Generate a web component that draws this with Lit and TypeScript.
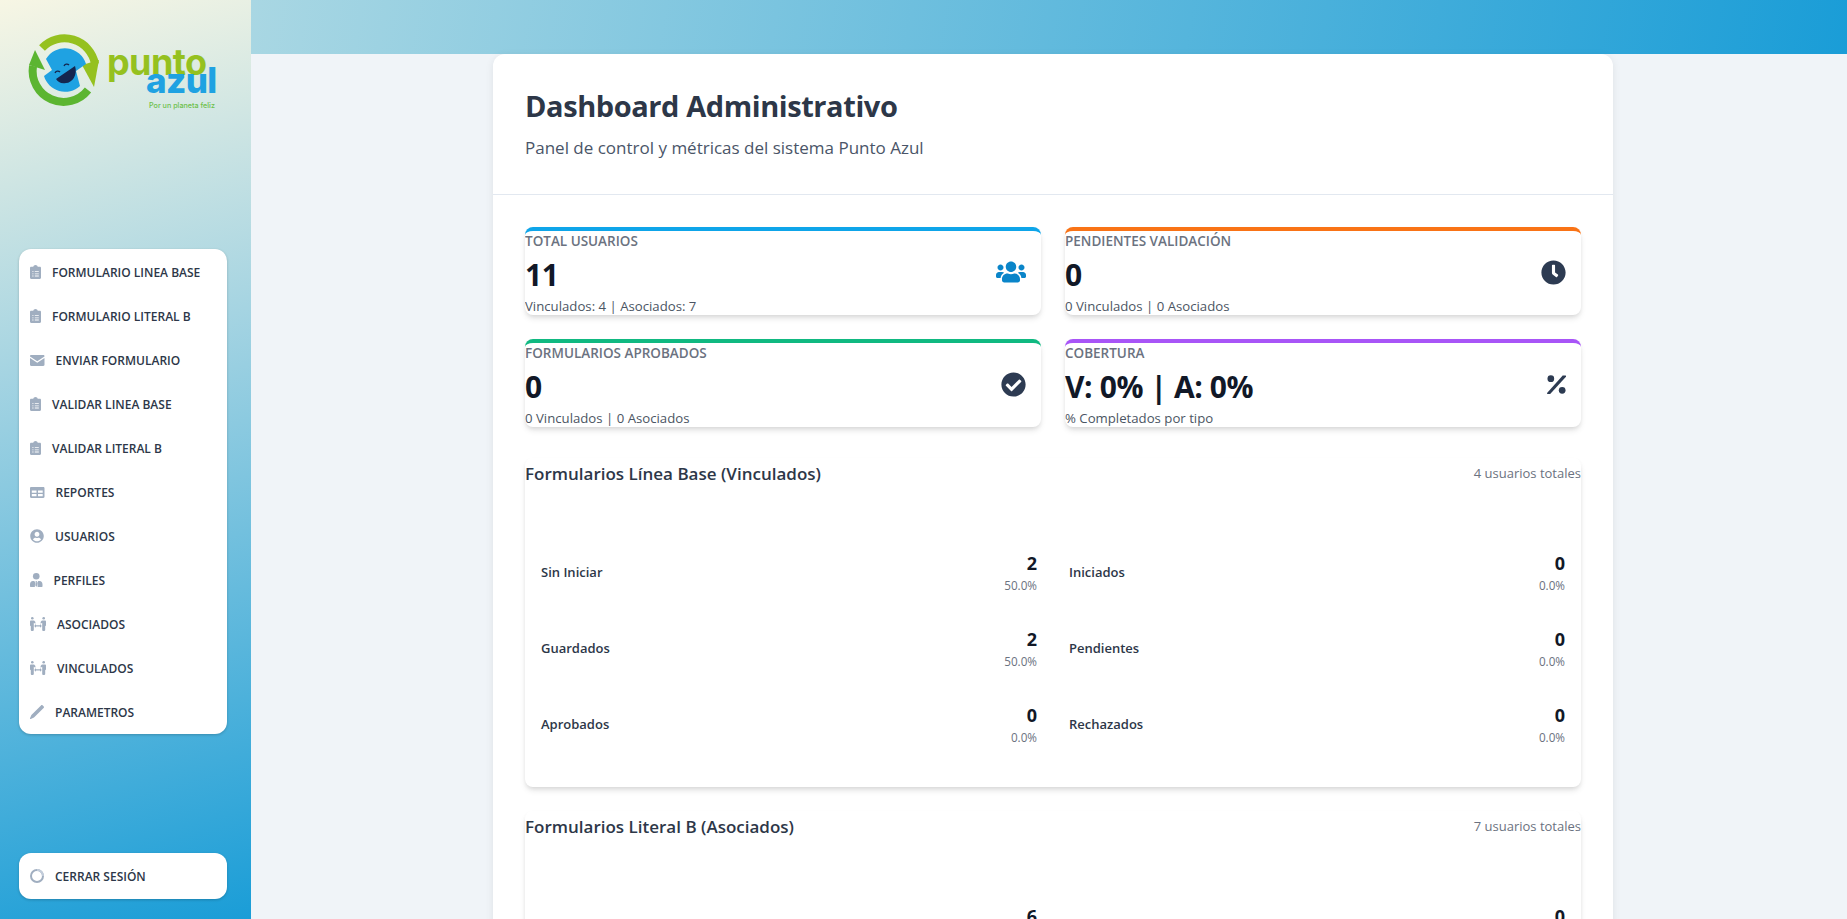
import { html, css, svg, LitElement } from "lit";
import { customElement } from "lit/decorators.js";

const clipboard = svg`<svg class="ico" style="width:11px;height:14px" viewBox="0 0 11 14"><path fill-rule="evenodd" d="M1.2 1.8h2.100C3.400.8 4.400 0 5.500 0s2.100.8 2.200 1.800h2.100c.7 0 1.200.5 1.200 1.200v9.800c0 .7-.5 1.200-1.200 1.200H1.200C.5 14 0 13.500 0 12.800V3c0-.7.500-1.200 1.200-1.200zM4.800 6.200h4v.8h-4zm0 2.200h4v.8h-4zm0 2.200h4v.8h-4zM2.300 6.200h1.200v.8H2.300zm0 2.200h1.200v.8H2.300zm0 2.200h1.200v.8H2.300z"/></svg>`;
const envelope = svg`<svg class="ico" style="width:14.500px;height:11px" viewBox="0 0 14.500 11"><path d="M0 1.200C0 .5.500 0 1.200 0h12.100c.7 0 1.200.5 1.200 1.200v.3L7.250 6.300 0 1.500z"/><path d="M0 2.900l7.250 4.800 7.250-4.800v6.900c0 .7-.5 1.200-1.200 1.200H1.200C.5 11 0 10.500 0 9.800z"/></svg>`;
const table = svg`<svg class="ico" style="width:14.500px;height:11px" viewBox="0 0 14.500 11"><path fill-rule="evenodd" d="M1.200 0h12.100c.7 0 1.200.5 1.200 1.200v8.600c0 .7-.5 1.200-1.200 1.200H1.200C.5 11 0 10.500 0 9.800V1.200C0 .5.500 0 1.200 0zM1.800 3.400v2.300h4.700V3.400zm6.200 0v2.300h4.700V3.400zM1.800 7v2.200h4.700V7zm6.200 0v2.200h4.700V7z"/></svg>`;
const userCircle = svg`<svg class="ico" style="width:14px;height:14px" viewBox="0 0 496 512"><path d="M248 8C111 8 0 119 0 256s111 248 248 248 248-111 248-248S385 8 248 8zm0 96c48.600 0 88 39.400 88 88s-39.400 88-88 88-88-39.400-88-88 39.400-88 88-88zm0 344c-58.700 0-111.300-26.600-146.500-68.200 18.800-35.400 55.600-59.800 98.500-59.800 2.400 0 4.800.4 7.100 1.100 13 4.200 26.600 6.900 40.900 6.900 14.300 0 28-2.700 40.900-6.900 2.300-.7 4.700-1.100 7.100-1.100 42.900 0 79.700 24.400 98.500 59.800C359.300 421.400 306.700 448 248 448z"/></svg>`;
const userTie = svg`<svg class="ico" style="width:12.500px;height:14px" viewBox="0 0 12.500 14"><circle cx="6.250" cy="3.300" r="3.300"/><path d="M2.800 8h1.500l1 1.700-.5 3.500.2.800H.6C.2 14 0 13.700 0 13.300v-1.900C0 9.500 1.200 8 2.800 8zM9.700 8H8.200l-1 1.700.5 3.500-.2.800h4.400c.4 0 .6-.3.6-.7v-1.900C12.500 9.500 11.300 8 9.700 8z"/><path d="M5.600 8h1.300l-.1 1.300.4 3-.95 1.700-.95-1.700.4-3z"/></svg>`;
const peopleArrows = svg`<svg class="ico" style="width:16px;height:14px" viewBox="0 0 16 14"><circle cx="2.300" cy="1.300" r="1.300"/><circle cx="13.700" cy="1.300" r="1.300"/><path d="M.8 3.600h2.800c.6 0 1.100.3 1.400.8l.4.7v1.700l-1.600-1v7.200c0 .5-.4.9-.9.9H1.700c-.5 0-.9-.4-.9-.9V9.300L0 8.500V4.400c0-.5.300-.8.800-.8zM15.200 3.600h-2.800c-.6 0-1.100.3-1.400.8l-.4.7v1.700l1.600-1v7.200c0 .5.400.9.900.9h1.200c.5 0 .9-.4.900-.9V9.300l.8-.8V4.400c0-.5-.3-.8-.8-.8z"/><path d="M6 8.200h4V7l1.800 1.900L10 10.800V9.600H6v1.200L4.200 8.900 6 7z"/></svg>`;
const pencil = svg`<svg class="ico" style="width:14px;height:14px" viewBox="0 0 14 14"><path d="M11 .4c.5-.5 1.200-.5 1.700 0l.9.9c.5.5.5 1.200 0 1.700L4 12.600.8 14c-.5.2-1-.3-.8-.8L1.400 10z"/></svg>`;
const ring = svg`<svg class="ico" style="width:14px;height:14px" viewBox="0 0 14 14"><circle cx="7" cy="7" r="6" fill="none" stroke="#a0aec0" stroke-width="2"/><path d="M7 1a6 6 0 0 1 6 6" fill="none" stroke="#c3cddb" stroke-width="2"/></svg>`;

const users = svg`<svg class="stat-ico" width="30" height="24" viewBox="0 0 640 512" fill="#0a85c9"><path d="M96 224c35.300 0 64-28.700 64-64s-28.700-64-64-64-64 28.700-64 64 28.700 64 64 64zm448 0c35.300 0 64-28.700 64-64s-28.700-64-64-64-64 28.700-64 64 28.700 64 64 64zm32 32h-64c-17.600 0-33.500 7.100-45.100 18.600 40.300 22.100 68.900 62 75.100 109.400h66c17.700 0 32-14.300 32-32v-32c0-35.300-28.700-64-64-64zm-256 0c61.900 0 112-50.100 112-112S381.900 32 320 32 208 82.100 208 144s50.100 112 112 112zm76.800 32h-8.300c-20.800 10-43.900 16-68.500 16s-47.600-6-68.500-16h-8.300C179.600 288 128 339.600 128 403.200V432c0 26.500 21.500 48 48 48h288c26.500 0 48-21.500 48-48v-28.800c0-63.600-51.600-115.200-115.200-115.200zm-223.700-13.400C161.500 263.100 145.600 256 128 256H64c-35.300 0-64 28.700-64 64v32c0 17.700 14.300 32 32 32h65.900c6.300-47.400 34.900-87.300 75.200-109.400z"/></svg>`;
const clock = svg`<svg class="stat-ico" width="25" height="25" viewBox="0 0 512 512" fill="#2d3b52"><path d="M256 8C119 8 8 119 8 256s111 248 248 248 248-111 248-248S393 8 256 8zm92.490 313l-20 25a16 16 0 0 1-22.490 2.500l-67-49.720a40 40 0 0 1-15-31.230V112a16 16 0 0 1 16-16h32a16 16 0 0 1 16 16v144l58 42.500a16 16 0 0 1 2.490 22.500z"/></svg>`;
const check = svg`<svg class="stat-ico" width="25" height="25" viewBox="0 0 512 512" fill="#2d3b52"><path d="M504 256c0 136.967-111.033 248-248 248S8 392.967 8 256 119.033 8 256 8s248 111.033 248 248zM227.314 387.314l184-184c6.248-6.248 6.248-16.379 0-22.627l-22.627-22.627c-6.248-6.249-16.379-6.249-22.628 0L216 308.118l-70.059-70.059c-6.248-6.248-16.379-6.248-22.628 0l-22.627 22.627c-6.248 6.248-6.248 16.379 0 22.627l104 104c6.249 6.249 16.379 6.249 22.628.001z"/></svg>`;
const percent = svg`<svg class="stat-ico" width="19" height="21" viewBox="0 0 18 20" fill="#2d3b52"><circle cx="3.600" cy="4.500" r="3.200"/><circle cx="14.400" cy="15.500" r="3.200"/><path d="M15.200 1.500h2.300c.5 0 .8.600.5 1L3.200 18.700c-.2.200-.4.300-.7.300H.5c-.5 0-.8-.6-.5-1L14.500 1.800c.2-.2.400-.3.700-.3z"/></svg>`;

const navItems = [
  { icon: clipboard, label: "FORMULARIO LINEA BASE" },
  { icon: clipboard, label: "FORMULARIO LITERAL B" },
  { icon: envelope, label: "ENVIAR FORMULARIO" },
  { icon: clipboard, label: "VALIDAR LINEA BASE" },
  { icon: clipboard, label: "VALIDAR LITERAL B" },
  { icon: table, label: "REPORTES" },
  { icon: userCircle, label: "USUARIOS" },
  { icon: userTie, label: "PERFILES" },
  { icon: peopleArrows, label: "ASOCIADOS" },
  { icon: peopleArrows, label: "VINCULADOS" },
  { icon: pencil, label: "PARAMETROS" },
];

const stats = [
  { label: "TOTAL USUARIOS", value: "11", sub: "Vinculados: 4 | Asociados: 7", color: "#0ea5e9", icon: users },
  { label: "PENDIENTES VALIDACIÓN", value: "0", sub: "0 Vinculados | 0 Asociados", color: "#f97316", icon: clock },
  { label: "FORMULARIOS APROBADOS", value: "0", sub: "0 Vinculados | 0 Asociados", color: "#10b981", icon: check },
  { label: "COBERTURA", value: "V: 0% | A: 0%", sub: "% Completados por tipo", color: "#a855f7", icon: percent },
];

const sections = [
  {
    title: "Formularios Línea Base (Vinculados)",
    total: "4 usuarios totales",
    rows: [
      ["Sin Iniciar", "2", "50.0%"],
      ["Iniciados", "0", "0.0%"],
      ["Guardados", "2", "50.0%"],
      ["Pendientes", "0", "0.0%"],
      ["Aprobados", "0", "0.0%"],
      ["Rechazados", "0", "0.0%"],
    ],
  },
  {
    title: "Formularios Literal B (Asociados)",
    total: "7 usuarios totales",
    rows: [
      ["Sin Iniciar", "6", "85.7%"],
      ["Iniciados", "0", "0.0%"],
    ],
  },
];

@customElement("app-root")
export class AppRoot extends LitElement {
  static styles = css`
    :host {
      display: grid;
      grid-template-columns: 251px 1fr;
      height: 919px;
      overflow: hidden;
      font-family: "Open Sans", "Noto Sans", sans-serif;
      background: #f0f4f8;
    }
    .sidebar {
      display: flex;
      flex-direction: column;
      height: 919px;
      box-sizing: border-box;
      padding: 0 24px 20px 19px;
      background: linear-gradient(165deg, #f7f6e4 0%, #a5d4e2 38%, #1a9dd7 100%);
    }
    .logo {
      display: block;
      margin: 0 -24px 0 -19px;
      width: 251px;
      height: 249px;
      flex: none;
    }
    .nav,
    .logout {
      background: #fff;
      border-radius: 12px;
      box-shadow: 0 1px 3px rgba(0, 0, 0, 0.2);
    }
    .nav {
      padding-top: 1px;
    }
    .item {
      display: flex;
      align-items: center;
      gap: 11px;
      height: 44px;
      padding-left: 11px;
      font-size: 12px;
      font-weight: 600;
      color: #2d3748;
      white-space: nowrap;
    }
    .ico {
      flex: none;
      fill: #a0aec0;
    }
    .logout {
      margin-top: auto;
      height: 46px;
    }
    .logout .item {
      height: 46px;
    }
    .main {
      min-width: 0;
    }
    .topbar {
      height: 54px;
      background: linear-gradient(100deg, #a9d7e3 0%, #1a9dd7 100%);
    }
    .card {
      width: 1120px;
      margin-left: 242px;
      background: #fff;
      border-radius: 12px 12px 0 0;
      box-shadow: 0 2px 8px rgba(0, 0, 0, 0.08);
    }
    .head {
      padding: 32px 32px 33.500px;
      border-bottom: 1px solid #e2e8f0;
    }
    h1 {
      margin: 0;
      font-size: 29px;
      line-height: 40px;
      font-weight: 700;
      letter-spacing: -0.42px;
      color: #2d3748;
    }
    .head p {
      margin: 10px 0 0;
      font-size: 17px;
      line-height: 24px;
      color: #4a5568;
    }
    .body {
      padding: 32px 32px 0;
    }
    .stats {
      display: grid;
      grid-template-columns: 1fr 1fr;
      gap: 24px;
      margin-bottom: 31px;
    }
    .stat {
      display: flex;
      flex-direction: column;
      height: 88px;
      box-sizing: border-box;
      border-top: 4px solid;
      border-radius: 8px;
      background: #fff;
      box-shadow: 0 4px 6px -1px rgba(0, 0, 0, 0.12), 0 2px 4px -1px rgba(0, 0, 0, 0.07);
      overflow: hidden;
    }
    .stat-label {
      padding-top: 1px;
      font-size: 13.500px;
      line-height: 18px;
      font-weight: 600;
      color: #6b7280;
    }
    .stat-mid {
      display: flex;
      justify-content: space-between;
      align-items: center;
      flex: 1;
      padding-right: 15px;
    }
    .stat-ico {
      margin-top: -2px;
    }
    .stat-value {
      margin-top: 3px;
      font-size: 30px;
      line-height: 44px;
      font-weight: 700;
      letter-spacing: -0.4px;
      color: #111827;
    }
    .stat-sub {
      padding-bottom: 1px;
      font-size: 13.200px;
      line-height: 18px;
      color: #4b5563;
    }
    .section {
      margin-top: 24px;
      padding-bottom: 25px;
      border-radius: 8px;
      box-shadow: 0 4px 6px -1px rgba(0, 0, 0, 0.12), 0 2px 4px -1px rgba(0, 0, 0, 0.07);
    }
    .section-head {
      display: flex;
      justify-content: space-between;
      align-items: center;
      height: 31px;
    }
    h2 {
      margin: 0;
      font-size: 17px;
      font-weight: 600;
      color: #2d3748;
    }
    .total {
      font-size: 13px;
      color: #6b7280;
    }
    .rows {
      display: grid;
      grid-template-columns: 1fr 1fr;
      column-gap: 32px;
      padding: 45px 16px 0;
    }
    .row {
      display: flex;
      justify-content: space-between;
      align-items: center;
      height: 76px;
    }
    .row-label {
      font-size: 13px;
      font-weight: 600;
      color: #2d3748;
    }
    .row-num {
      text-align: right;
    }
    .row-value {
      font-size: 18px;
      line-height: 24px;
      font-weight: 700;
      color: #111827;
    }
    .row-pct {
      margin-top: 2px;
      font-size: 11.700px;
      line-height: 16px;
      color: #6b7280;
    }
  `;

  private logo() {
    return svg`<svg class="logo" viewBox="0 0 251 249">
      <path d="M42 48A31 31 0 0 1 95 64" fill="none" stroke="#95c11f" stroke-width="8"/>
      <path d="M82 65l17-5l-5 27z" fill="#95c11f"/>
      <path d="M88 90A31 31 0 0 1 33 66" fill="none" stroke="#5cb531" stroke-width="8"/>
      <path d="M29 65l6-15l10 20z" fill="#5cb531"/>
      <path d="M46 59A22 22 0 0 1 86 64L76 71L80 86A22 22 0 0 1 44 76L52 70z" fill="#1fa2e2"/>
      <path d="M56 79L75 66C78 75 72 83 66 83C61 84 58 82 56 79z" fill="#14264f"/>
      <path d="M55 73a3 3 0 0 1 5-1M64 66a3 3 0 0 1 5-1" fill="none" stroke="#14264f" stroke-width="1.300"/>
      <text x="107" y="75" font-family="Inter, sans-serif" font-weight="700" font-size="36" letter-spacing="-.6" fill="#95c11f">punto</text>
      <text x="146" y="93" font-family="Inter, sans-serif" font-weight="800" font-size="35" letter-spacing="-.6" fill="#1fa2e2">azul</text>
      <text x="149" y="108" font-family="Inter, sans-serif" font-weight="500" font-size="7.200" fill="#6cc04a">Por un planeta feliz</text>
    </svg>`;
  }

  render() {
    return html`
      <aside class="sidebar">
        ${this.logo()}
        <nav class="nav">
          ${navItems.map((n) => html`<div class="item">${n.icon}<span>${n.label}</span></div>`)}
        </nav>
        <div class="logout"><div class="item">${ring}<span>CERRAR SESIÓN</span></div></div>
      </aside>
      <div class="main">
        <div class="topbar"></div>
        <div class="card">
          <header class="head">
            <h1>Dashboard Administrativo</h1>
            <p>Panel de control y métricas del sistema Punto Azul</p>
          </header>
          <div class="body">
            <div class="stats">
              ${stats.map(
                (s) => html`<div class="stat" style="border-top-color:${s.color}">
                  <div class="stat-label">${s.label}</div>
                  <div class="stat-mid"><span class="stat-value">${s.value}</span>${s.icon}</div>
                  <div class="stat-sub">${s.sub}</div>
                </div>`
              )}
            </div>
            ${sections.map(
              (sec) => html`<section class="section">
                <div class="section-head"><h2>${sec.title}</h2><span class="total">${sec.total}</span></div>
                <div class="rows">
                  ${sec.rows.map(
                    (r) => html`<div class="row">
                      <span class="row-label">${r[0]}</span>
                      <div class="row-num"><div class="row-value">${r[1]}</div><div class="row-pct">${r[2]}</div></div>
                    </div>`
                  )}
                </div>
              </section>`
            )}
          </div>
        </div>
      </div>
    `;
  }
}
